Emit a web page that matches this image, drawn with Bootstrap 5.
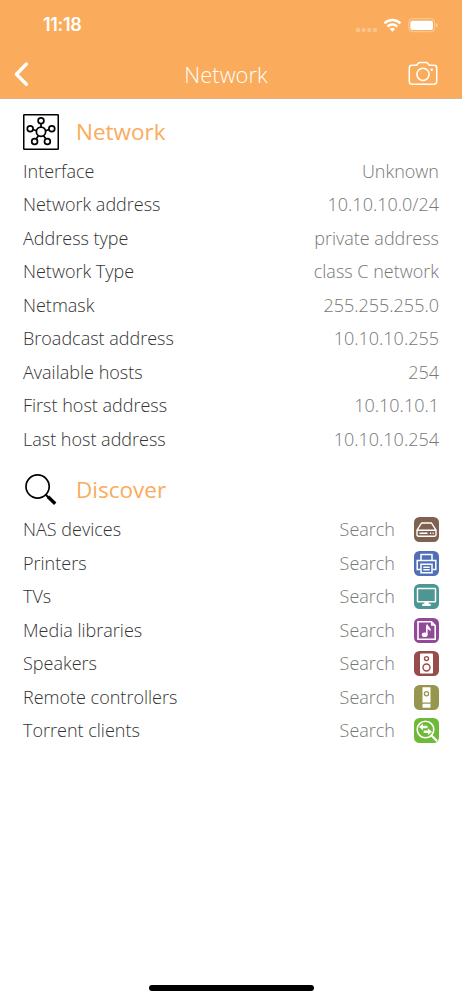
<!DOCTYPE html>
<html lang="en">
<head>
<meta charset="utf-8">
<meta name="viewport" content="width=device-width, initial-scale=1">
<title>Network</title>
<link href="https://cdn.jsdelivr.net/npm/bootstrap@5.3.0/dist/css/bootstrap.min.css" rel="stylesheet">
<style>
  body { font-family: "Open Sans", sans-serif; font-weight: 300; font-size: 18px; line-height: 33.5px; color: #333; background: #fff; }
  svg { display: block; flex: none; }
  .screen { height: 1000px; overflow: hidden; }
  .topbar { height: 99px; background: #faab5c; border-bottom: 1px solid #d9b48d; color: #fff; }
  .status { height: 50px; padding: 0 23px 0 43px; }
  .clock { font: 600 18px/50px Inter, sans-serif; letter-spacing: -.3px; }
  .titlebar { height: 48px; padding: 0 24px 0 14px; }
  .title { font-size: 22px; line-height: 46px; }
  .section-head { height: 46px; }
  .section-title { font-size: 22.5px; font-weight: 400; line-height: 46px; color: #faab5c; margin-left: 17px; }
  .item { height: 33.48px; }
  .value { color: #777; }
  .content { padding: 10px 23px 0 23px; }
  .gap-head { margin-top: 11px; }
  .tile { margin-left: 19px; }
  .homebar { width: 165px; height: 6px; border-radius: 3px; background: #000; margin-bottom: 9px; }
</style>
</head>
<body>
<div class="screen d-flex flex-column">
  <header class="topbar flex-shrink-0">
    <div class="status d-flex justify-content-between align-items-center">
      <span class="clock">11:18</span>
      <svg width="84" height="16" viewBox="355 17 84 16" fill="#fff">
        <g opacity=".3"><rect x="356" y="28" width="4" height="4" rx="1.3"/><rect x="361.700" y="28" width="4" height="4" rx="1.300"/><rect x="367.300" y="28" width="4" height="4" rx="1.300"/><rect x="373" y="28" width="4" height="4" rx="1.300"/></g>
        <g fill="none" stroke="#fff" stroke-width="2.500"><path d="M384.400 23.300a11.400 11.400 0 0 1 16 0"/><path d="M387.500 26.600a7 7 0 0 1 9.800 0"/></g>
        <path d="M392.400 31.800l-2.700-2.700a4 4 0 0 1 5.400 0z"/>
        <rect x="408.700" y="18.700" width="26" height="13" rx="4" fill="none" stroke="#fff" stroke-opacity=".4"/>
        <rect x="410.300" y="20.700" width="22.700" height="9.300" rx="2.200"/>
        <path d="M436 23v4.500q1.600-.7 1.600-2.250T436 23z" opacity=".45"/>
      </svg>
    </div>
    <div class="titlebar d-flex justify-content-between align-items-center">
      <svg width="30" height="26" viewBox="14 61 30 26" fill="none" stroke="#fff" stroke-width="3.400" stroke-linecap="round" stroke-linejoin="round"><path d="M26.400 64l-10 10.200 10 10"/></svg>
      <span class="title">Network</span>
      <svg width="30" height="26" viewBox="408 61 30 26" fill="none" stroke="#fff" stroke-width="1.500" stroke-linejoin="round"><path d="M412 65.200h4.500l2.300-2.300q.5-.5 1.200-.5h6q.7 0 1.200.5l2.300 2.300h4.500q2.700 0 2.700 2.700v13.700q0 2.700-2.700 2.700h-22q-2.700 0-2.700-2.700v-13.700q0-2.700 2.700-2.700z"/><circle cx="423" cy="74.300" r="6.100"/><circle cx="431.700" cy="69.800" r="1.300" fill="#fff" stroke="none"/></svg>
    </div>
  </header>

  <main class="content flex-grow-1">
    <section>
      <div class="section-head d-flex align-items-center">
        <svg width="36" height="36" viewBox="0 0 36 36" fill="none" stroke="#000" stroke-width="1.700"><rect x=".75" y=".75" width="34.500" height="34.500" rx=".5" stroke-width="1.500"/><path d="M18 9.500v4M10 15.500l3.500 1.200M26 15.500l-3.500 1.200M15.600 21.500l-2.300 3.300M20.400 21.500l2.300 3.300"/><circle cx="18" cy="17.700" r="4.600"/><circle cx="18" cy="6.800" r="2.900"/><circle cx="7.200" cy="14.800" r="2.900"/><circle cx="28.800" cy="14.800" r="2.900"/><circle cx="11.600" cy="27.500" r="2.900"/><circle cx="24.400" cy="27.500" r="2.900"/></svg>
        <span class="section-title">Network</span>
      </div>
      <div class="item d-flex justify-content-between"><span>Interface</span><span class="value">Unknown</span></div>
      <div class="item d-flex justify-content-between"><span>Network address</span><span class="value">10.10.10.0/24</span></div>
      <div class="item d-flex justify-content-between"><span>Address type</span><span class="value">private address</span></div>
      <div class="item d-flex justify-content-between"><span>Network Type</span><span class="value">class C network</span></div>
      <div class="item d-flex justify-content-between"><span>Netmask</span><span class="value">255.255.255.0</span></div>
      <div class="item d-flex justify-content-between"><span>Broadcast address</span><span class="value">10.10.10.255</span></div>
      <div class="item d-flex justify-content-between"><span>Available hosts</span><span class="value">254</span></div>
      <div class="item d-flex justify-content-between"><span>First host address</span><span class="value">10.10.10.1</span></div>
      <div class="item d-flex justify-content-between"><span>Last host address</span><span class="value">10.10.10.254</span></div>
    </section>

    <section class="gap-head">
      <div class="section-head d-flex align-items-center">
        <svg width="36" height="36" viewBox="0 0 36 36" fill="none" stroke="#000"><circle cx="14.600" cy="14.500" r="11.600" stroke-width="1.700"/><path d="M22.800 22.700l3 3" stroke-width="2"/><path d="M25 24.800l7.200 7" stroke-width="3.400"/></svg>
        <span class="section-title">Discover</span>
      </div>
      <div class="item d-flex align-items-center"><span>NAS devices</span><span class="value ms-auto">Search</span>
        <svg class="tile" width="25" height="25" viewBox="0 0 25 25" fill="none" stroke="#fff" stroke-width="1.400" stroke-linejoin="round"><rect width="25" height="25" rx="5.500" fill="#80604f" stroke="none"/><path d="M7.500 6h10l4.500 7.200v4.600q0 1.400-1.400 1.400H4.400Q3 19.200 3 17.800v-4.600zM3 13.200h19"/><path d="M5.500 16.300h8M16 16.300h1.200M18.600 16.300h1.200"/></svg></div>
      <div class="item d-flex align-items-center"><span>Printers</span><span class="value ms-auto">Search</span>
        <svg class="tile" width="25" height="25" viewBox="0 0 25 25" fill="none" stroke="#fff" stroke-width="1.500"><rect width="25" height="25" rx="5.500" fill="#4f6fb8" stroke="none"/><path d="M7 9V3.500h11V9M6.500 18.500H3.200V9.500h18.600v9h-3.300"/><path d="M7 13.200h11v8.500H7zM9.300 16.200h6.400M9.300 18.800h6.400"/></svg></div>
      <div class="item d-flex align-items-center"><span>TVs</span><span class="value ms-auto">Search</span>
        <svg class="tile" width="25" height="25" viewBox="0 0 25 25" fill="none"><rect width="25" height="25" rx="5.500" fill="#4c9694"/><rect x="3.500" y="4.500" width="18" height="13.300" rx=".6" stroke="#fff" stroke-width="1.500"/><path d="M10.300 18h4.400v1.800h2V22H8.300v-2.200h2z" fill="#fff"/></svg></div>
      <div class="item d-flex align-items-center"><span>Media libraries</span><span class="value ms-auto">Search</span>
        <svg class="tile" width="25" height="25" viewBox="0 0 25 25" fill="none" stroke="#fff" stroke-width="1.600"><rect width="25" height="25" rx="5.500" fill="#924a96" stroke="none"/><path d="M4 3.800h13.500l3.700 3.700v13.700H4z"/><path d="M17 3.800v4h4.200z" fill="#fff" stroke="none"/><path d="M12.800 16.500V7.500"/><path d="M12.400 6.500h1.300q.3 2 2.200 3.200 1.500 1.500.4 3.800-.5-2-3-2.500z" fill="#fff" stroke="none"/><ellipse cx="10.700" cy="16.800" rx="2.900" ry="2.300" fill="#fff" stroke="none"/></svg></div>
      <div class="item d-flex align-items-center"><span>Speakers</span><span class="value ms-auto">Search</span>
        <svg class="tile" width="25" height="25" viewBox="0 0 25 25" fill="none" stroke="#984b4b" stroke-width="1.400"><rect width="25" height="25" rx="5.500" fill="#984b4b" stroke="none"/><rect x="6" y="2.500" width="13" height="20" rx=".8" fill="#fff" stroke="none"/><circle cx="12.500" cy="7.600" r="2"/><circle cx="12.500" cy="16.500" r="3.500"/></svg></div>
      <div class="item d-flex align-items-center"><span>Remote controllers</span><span class="value ms-auto">Search</span>
        <svg class="tile" width="25" height="25" viewBox="0 0 25 25" fill="none"><rect width="25" height="25" rx="5.500" fill="#96964f"/><path d="M8.500 2.300h8v15.200h-8zM8.500 18.700h8v4h-8z" fill="#fff"/><circle cx="12.500" cy="8.800" r="2.100" stroke="#96964f" stroke-width="1.300"/></svg></div>
      <div class="item d-flex align-items-center"><span>Torrent clients</span><span class="value ms-auto">Search</span>
        <svg class="tile" width="25" height="25" viewBox="0 0 25 25" fill="none" stroke="#fff"><rect width="25" height="25" rx="5.500" fill="#6db938" stroke="none"/><circle cx="11.500" cy="11.500" r="8.300" stroke-width="1.600"/><path d="M17.500 17.500l5 5" stroke-width="2.200" stroke-linecap="round"/><path d="M5 9l4-3.300v2h4.500v2.600H9v2zM18 13.700l-4 3.300v-2H9.700v-2.600H14v-2z" fill="#fff" stroke="none"/></svg></div>
    </section>
  </main>
  <div class="homebar align-self-center flex-shrink-0"></div>
</div>
<script src="https://cdn.jsdelivr.net/npm/bootstrap@5.3.0/dist/js/bootstrap.bundle.min.js"></script>
</body>
</html>
